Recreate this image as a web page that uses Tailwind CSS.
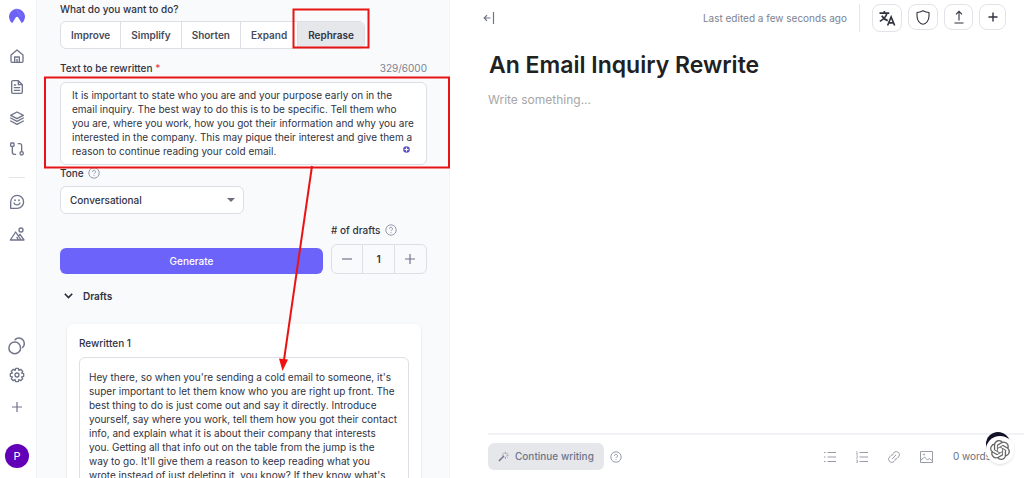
<!DOCTYPE html>
<html lang="en">
<head>
  <meta charset="UTF-8" />
  <meta name="viewport" content="width=device-width, initial-scale=1.0" />
  <title>An Email Inquiry Rewrite</title>
  <script src="https://cdn.jsdelivr.net/npm/@tailwindcss/browser@4"></script>
</head>
<body class="relative flex h-screen overflow-hidden bg-white font-['Inter',sans-serif] text-[10px] text-[#30333f]">

  <!-- Sidebar -->
  <nav class="flex w-9 shrink-0 flex-col items-center pr-0.5 pt-2 text-[#6f7489]" aria-label="Main">
    <a href="#" aria-label="Home page" class="mb-6">
      <svg class="size-4" viewBox="0 0 16 16"><path d="M3.2 15.2A8 8 0 1 1 12.8 15.2L9.6 10Q8 7.6 6.4 10Z" fill="#6c63f5"/><path d="M7 0.500L12.500 9" stroke="#918bff" stroke-width=".6"/></svg>
    </a>
    <div class="flex flex-col items-center gap-[15px]">
      <a href="#" aria-label="Home"><svg class="size-4" viewBox="0 0 24 24" fill="none" stroke="currentColor" stroke-width="2" stroke-linejoin="round" stroke-linecap="round"><path d="M3 10.500L12 3l9 7.500V20a1.500 1.500 0 0 1-1.500 1.500h-15A1.500 1.500 0 0 1 3 20zM8.500 21v-7.500h7V21M12 17v4"/></svg></a>
      <a href="#" aria-label="Documents"><svg class="size-4" viewBox="0 0 24 24" fill="none" stroke="currentColor" stroke-width="2" stroke-linejoin="round" stroke-linecap="round"><path d="M14 2.500H6A2 2 0 0 0 4 4.500v15a2 2 0 0 0 2 2h12a2 2 0 0 0 2-2v-11zM14 2.500v6h6M8 9h2M8 13h8M8 17h8"/></svg></a>
      <a href="#" aria-label="Templates"><svg class="size-4" viewBox="0 0 24 24" fill="none" stroke="currentColor" stroke-width="2" stroke-linejoin="round" stroke-linecap="round"><path d="M12 3L2.500 8 12 13l9.500-5zM2.500 12L12 17l9.500-5M2.500 16.500L12 21.500l9.500-5"/></svg></a>
      <a href="#" aria-label="Recipes"><svg class="size-4" viewBox="0 0 24 24" fill="none" stroke="currentColor" stroke-width="2" stroke-linejoin="round" stroke-linecap="round"><rect x="2.500" y="3" width="5" height="5" rx="1"/><path d="M5 8v9a3 3 0 0 0 3 3h2M14 4h2a3 3 0 0 1 3 3v9"/><circle cx="19" cy="18.500" r="2.500"/></svg></a>
    </div>
    <hr class="mt-5 w-4 border-[#e4e5ea]" />
    <div class="mt-4 flex flex-col items-center gap-4">
      <a href="#" aria-label="Chat"><svg class="size-4" viewBox="0 0 24 24" fill="none" stroke="currentColor" stroke-width="2" stroke-linejoin="round" stroke-linecap="round"><path d="M2.500 21.500V12A9.700 9.700 0 1 1 12 21.500z"/><path d="M7.500 13.500a5 5 0 0 0 9 0"/><path d="M9 9v.5M15 9v.5" stroke-width="2.600"/></svg></a>
      <a href="#" aria-label="Art"><svg class="size-4" viewBox="0 0 24 24" fill="none" stroke="currentColor" stroke-width="2" stroke-linejoin="round" stroke-linecap="round"><circle cx="18" cy="6" r="3"/><path d="M2 21L10 9l8 12zM14.500 14.500l2-2L22.500 21H18M14 21l-2-4"/></svg></a>
    </div>
    <div class="mt-auto flex flex-col items-center">
      <a href="#" aria-label="Themes"><svg class="size-[18px]" viewBox="0 0 24 24" fill="none" stroke="currentColor" stroke-width="2"><circle cx="9" cy="14.500" r="7.800"/><path d="M9.500 3.500A7.200 7.200 0 1 1 19.500 14" stroke-linecap="round"/></svg></a>
      <a href="#" aria-label="Settings" class="mt-3"><svg class="size-4" viewBox="0 0 24 24" fill="none" stroke="currentColor" stroke-width="2" stroke-linejoin="round"><circle cx="12" cy="12" r="3"/><path d="M10 2h4l.8 3 2.700-1.500 3 3L19 9.200l3 .8v4l-3 .8 1.500 2.700-3 3-2.700-1.500-.8 3h-4l-.8-3-2.700 1.500-3-3L5 14.800 2 14v-4l3-.8-1.500-2.700 3-3L9.200 5z"/></svg></a>
      <button type="button" aria-label="Add" class="mt-4"><svg class="size-4" viewBox="0 0 16 16" stroke="currentColor" stroke-width="1.200"><path d="M8 3v10M3 8h10"/></svg></button>
      <button type="button" aria-label="Account" class="mt-[29px] mb-2.5 size-6 rounded-full bg-[#6200b8] text-[11px] text-white">P</button>
    </div>
  </nav>

  <!-- Form panel -->
  <main class="w-[414px] shrink-0 overflow-hidden border-x border-[#f3f4f6] bg-[#f9fafc] pt-0.5 pr-[22px] pl-[23px]">
    <p class="font-medium leading-[14px]">What do you want to do?</p>
    <div class="mt-[5px] flex h-7 w-fit divide-x divide-[#dddfe4] overflow-hidden rounded-md border border-[#dddfe4] bg-white font-semibold text-[#474b5c]">
      <button type="button" class="px-2.5">Improve</button>
      <button type="button" class="px-2.5">Simplify</button>
      <button type="button" class="px-2.5">Shorten</button>
      <button type="button" class="px-2.5">Expand</button>
      <button type="button" class="bg-[#e5e7eb] px-2.5 text-[#30333f]">Rephrase</button>
    </div>

    <div class="mt-3 flex justify-between leading-[14px]">
      <label for="source" class="font-medium">Text to be rewritten <span class="text-[#f04438]">*</span></label>
      <span class="text-[#7d8290]">329/6000</span>
    </div>
    <div class="relative mt-[7px]">
      <textarea id="source" class="block h-[83px] w-full resize-none overflow-hidden rounded-md border border-[#dddfe4] bg-white px-[11px] py-[5px] leading-[14px]">It is important to state who you are and your purpose early on in the email inquiry. The best way to do this is to be specific. Tell them who you are, where you work, how you got their information and why you are interested in the company. This may pique their interest and give them a reason to continue reading your cold email.</textarea>
      <svg class="absolute right-[17px] bottom-3 size-[7px]" viewBox="0 0 7 7"><circle cx="3.500" cy="3.500" r="3.300" fill="#5b50c8"/><path d="M3.500 1.500v4M1.500 3.500h4" stroke="#fff" stroke-width="1"/></svg>
    </div>

    <div class="mt-[1px] flex items-center gap-1 leading-[14px]">
      <label for="tone" class="font-medium">Tone</label>
      <svg class="size-3" viewBox="0 0 12 12" fill="none" stroke="#8b90a0"><circle cx="6" cy="6" r="5.200" stroke-width=".9"/><path d="M4.500 4.800a1.500 1.500 0 1 1 2.200 1.300Q6 6.500 6 7.100M6 8.200v.9" stroke-width=".9"/></svg>
    </div>
    <div class="relative mt-[6px] w-[184px]">
      <select id="tone" class="h-7 w-full appearance-none rounded-md border border-[#dddfe4] bg-white px-[9px] font-medium">
        <option>Conversational</option>
      </select>
      <svg class="pointer-events-none absolute top-3 right-[9px] h-1 w-2" viewBox="0 0 8 4"><path d="M0 0h8L4 4z" fill="#6b6f7b"/></svg>
    </div>

    <div class="mt-[9px] flex items-end gap-2">
      <button type="button" class="h-[26px] flex-1 rounded-md bg-[#6c63fa] font-medium text-white">Generate</button>
      <div class="w-24">
        <div class="flex items-center gap-[5px] leading-[14px]">
          <label for="drafts" class="font-medium">#&nbsp;of drafts</label>
          <svg class="size-3" viewBox="0 0 12 12" fill="none" stroke="#8b90a0"><circle cx="6" cy="6" r="5.200" stroke-width=".9"/><path d="M4.500 4.800a1.500 1.500 0 1 1 2.200 1.300Q6 6.500 6 7.100M6 8.200v.9" stroke-width=".9"/></svg>
        </div>
        <div class="mt-[7px] grid h-[30px] grid-cols-3 divide-x divide-[#dddfe4] rounded-md border border-[#dddfe4]">
          <button type="button" aria-label="Fewer drafts" class="grid place-items-center"><svg class="size-3" viewBox="0 0 12 12" stroke="#6f7489" stroke-width="1.200"><path d="M1 6h10"/></svg></button>
          <input id="drafts" type="text" value="1" class="w-full text-center font-semibold" />
          <button type="button" aria-label="More drafts" class="grid place-items-center"><svg class="size-3" viewBox="0 0 12 12" stroke="#6f7489" stroke-width="1.200"><path d="M1 6h10M6 1v10"/></svg></button>
        </div>
      </div>
    </div>

    <button type="button" class="mt-[15px] ml-1 flex w-fit items-center gap-2.5 font-semibold leading-[14px]">
      <svg class="h-[6px] w-[9px]" viewBox="0 0 9 6" fill="none" stroke="#262938" stroke-width="1.600"><path d="M.8 .8L4.500 4.500 8.200 .8"/></svg>
      Drafts
    </button>
    <section class="mt-[21px] mr-[6px] ml-[7px] rounded-md bg-white px-3 pt-3 shadow-sm">
      <label for="draft1" class="block font-medium leading-[14px]">Rewritten 1</label>
      <textarea id="draft1" class="mt-[7px] block h-[160px] w-full resize-none overflow-hidden rounded-md border border-[#dddfe4] bg-white py-3 pr-2.5 pl-[9px] leading-[14px]">Hey there, so when you're sending a cold email to someone, it's super important to let them know who you are right up front. The best thing to do is just come out and say it directly. Introduce yourself, say where you work, tell them how you got their contact info, and explain what it is about their company that interests
you. Getting all that info out on the table from the jump is the
way to go. It'll give them a reason to keep reading what you
wrote instead of just deleting it, you know? If they know what's</textarea>
    </section>
  </main>

  <!-- Editor -->
  <article class="flex min-w-0 flex-1 flex-col">
    <header class="flex items-center pt-1 pr-[18px] pl-[33px]">
      <button type="button" aria-label="Collapse panel"><svg class="h-3 w-3" viewBox="0 0 12 12" fill="none" stroke="#6f7489" stroke-width="1.200"><path d="M10.500 0v12M7.500 6H1.500M4 3.200L1.200 6 4 8.800"/></svg></button>
      <span class="ml-auto text-[#7d8290]">Last edited a few seconds ago</span>
      <div class="ml-3 flex items-start gap-[6px] border-l border-[#e5e7eb] pl-3 text-[#30333f]">
        <button type="button" aria-label="Translate" class="grid h-7 w-[30px] place-items-center rounded-lg border border-[#e1e3e8]"><svg class="size-[18px]" viewBox="0 0 24 24" fill="none" stroke="currentColor" stroke-width="2.200"><path d="M2 5.500h13M8.500 2.500v3M5 9Q8 14 13 15.500M12 5.500Q10.500 12 2.500 16.500"/><path d="M12.800 22L17.500 10.500 22.200 22M14.500 18.500h6"/></svg></button>
        <button type="button" aria-label="Plagiarism check" class="grid h-[26px] w-[30px] place-items-center rounded-lg border border-[#e1e3e8]"><svg class="h-[15px] w-[14px]" viewBox="0 0 14 15" fill="none" stroke="currentColor" stroke-width="1.100" stroke-linejoin="round"><path d="M7 .7Q10 2.200 13 2.500V6c0 4-2.500 8-6 8.300C3.500 14 1 10 1 6V2.500Q4 2.200 7 .7z"/></svg></button>
        <button type="button" aria-label="Export" class="grid h-[26px] w-[29px] place-items-center rounded-lg border border-[#e1e3e8]"><svg class="size-3.5" viewBox="0 0 14 14" fill="none" stroke="currentColor" stroke-width="1.100"><path d="M2.500 13h9M7 10.500V1.500M4 4.300L7 1.300l3 3"/></svg></button>
        <button type="button" aria-label="New document" class="grid h-[26px] w-[27px] place-items-center rounded-lg border border-[#e1e3e8]"><svg class="size-3" viewBox="0 0 12 12" stroke="currentColor" stroke-width="1.400"><path d="M1.500 6h9M6 1.500v9"/></svg></button>
      </div>
    </header>
    <h1 class="mt-[18px] px-[39px] text-[23px] leading-[30px] font-semibold text-[#212121]">An Email Inquiry Rewrite</h1>
    <p class="mt-3 px-[38px] text-[12px] leading-4 text-[#a6a6a6]">Write something...</p>

    <footer class="mt-auto ml-[38px] flex h-[45px] items-center border-t-2 border-[#f1f2f5] pr-[33px] text-[#9a9da8]">
      <button type="button" class="flex h-[27px] items-center gap-1.5 rounded-md bg-[#e5e7eb] px-2.5 font-medium text-[#6f7489]">
        <svg class="size-[11px]" viewBox="0 0 12 12" stroke="currentColor" fill="none"><path d="M1 11L6.500 5.500" stroke-width="1.600"/><path d="M8 1v2M8 6.500v2M4.500 4.500h1.500M9.500 4.500h2M5.500 2l1 1M10.500 2l-1 1M10.500 7l-1-1" stroke-width=".8"/></svg>
        Continue writing
      </button>
      <svg class="ml-1.5 size-3" viewBox="0 0 12 12" fill="none" stroke="#8b90a0"><circle cx="6" cy="6" r="5.200" stroke-width=".9"/><path d="M4.500 4.800a1.500 1.500 0 1 1 2.200 1.300Q6 6.500 6 7.100M6 8.200v.9" stroke-width=".9"/></svg>
      <div class="ml-auto flex items-center gap-5">
        <button type="button" aria-label="Bulleted list"><svg class="size-3" viewBox="0 0 12 12" stroke="currentColor"><path d="M0 1.500h1.500M0 6h1.500M0 10.500h1.500M3.500 1.500H12M3.500 6H12M3.500 10.500H12"/></svg></button>
        <button type="button" aria-label="Numbered list"><svg class="size-3" viewBox="0 0 12 12" fill="none" stroke="currentColor"><path d="M3.500 1.500H12M3.500 6H12M3.500 10.500H12"/><path d="M.3.600H1V3M0 3h2M.2 4.800h1.300v1L.3 7.200h1.500M.2 9h1.300v2.500H.2M.5 10.200h1" stroke-width=".7"/></svg></button>
        <button type="button" aria-label="Link"><svg class="size-3" viewBox="0 0 24 24" fill="none" stroke="currentColor" stroke-width="2" stroke-linecap="round"><path d="M10 5l2-2a6 6 0 0 1 9 9l-3 3a6 6 0 0 1-4 1.500M14 19l-2 2a6 6 0 0 1-9-9l3-3a6 6 0 0 1 4-1.500M8.500 15.500l7-7"/></svg></button>
        <button type="button" aria-label="Image"><svg class="h-3 w-[13px]" viewBox="0 0 13 12" fill="none" stroke="currentColor"><path d="M.5.500h12v11H.5zM.5 9.500L4.500 6l3 3L9.500 7.500l3 2.500"/><circle cx="4" cy="3.500" r=".6"/></svg></button>
        <span class="text-[#6b6f7b]">0 words</span>
      </div>
    </footer>
  </article>

  <!-- Assistant bubble -->
  <div class="absolute right-[14px] bottom-[22px] size-6 rounded-full bg-[#111127]"></div>
  <button type="button" aria-label="Open assistant" class="absolute right-[10px] bottom-[14px] grid size-7 place-items-center rounded-full bg-white shadow">
    <svg class="size-5" viewBox="0 0 24 24" fill="#666"><path d="M22.282 9.821a5.985 5.985 0 0 0-.516-4.910 6.046 6.046 0 0 0-6.510-2.900A6.065 6.065 0 0 0 4.981 4.182a5.985 5.985 0 0 0-3.998 2.900 6.046 6.046 0 0 0 .743 7.097 5.980 5.980 0 0 0 .510 4.911 6.051 6.051 0 0 0 6.515 2.900A5.985 5.985 0 0 0 13.260 24a6.056 6.056 0 0 0 5.772-4.206 5.990 5.990 0 0 0 3.998-2.900 6.056 6.056 0 0 0-.747-7.073zM13.260 22.430a4.476 4.476 0 0 1-2.876-1.040l.141-.081 4.779-2.758a.795.795 0 0 0 .392-.681v-6.737l2.020 1.169a.071.071 0 0 1 .038.052v5.583a4.504 4.504 0 0 1-4.494 4.493zM3.600 18.304a4.470 4.470 0 0 1-.535-3.014l.142.085 4.783 2.759a.771.771 0 0 0 .780 0l5.843-3.369v2.332a.080.080 0 0 1-.033.062L9.740 19.950a4.500 4.500 0 0 1-6.140-1.646zM2.341 7.896a4.485 4.485 0 0 1 2.365-1.973V11.600a.766.766 0 0 0 .388.677l5.815 3.354-2.020 1.169a.076.076 0 0 1-.071 0l-4.830-2.787A4.504 4.504 0 0 1 2.341 7.872zm16.596 3.856l-5.833-3.388L15.119 7.200a.076.076 0 0 1 .071 0l4.830 2.791a4.494 4.494 0 0 1-.676 8.105v-5.678a.790.790 0 0 0-.407-.666zm2.010-3.023l-.141-.085-4.774-2.782a.776.776 0 0 0-.785 0L9.409 9.230V6.897a.066.066 0 0 1 .028-.061l4.830-2.787a4.500 4.500 0 0 1 6.680 4.660zM8.307 12.863l-2.020-1.164a.080.080 0 0 1-.038-.057V6.075a4.500 4.500 0 0 1 7.375-3.453l-.142.080-4.778 2.758a.795.795 0 0 0-.393.681zm1.097-2.365l2.602-1.500 2.607 1.500v2.999l-2.597 1.500-2.607-1.500z"/></svg>
  </button>

  <!-- Tutorial markup -->
  <svg class="pointer-events-none absolute top-0 left-0 h-[478px] w-[460px]" viewBox="0 0 460 478" fill="none" stroke="#e81414" stroke-width="2">
    <rect x="293.500" y="9.500" width="75" height="38"/>
    <rect x="45" y="77.500" width="404" height="90"/>
    <path d="M312 166L284 360"/>
    <path d="M279 358.500l9 1L282.500 371z" fill="#f01010" stroke="none"/>
  </svg>
</body>
</html>
